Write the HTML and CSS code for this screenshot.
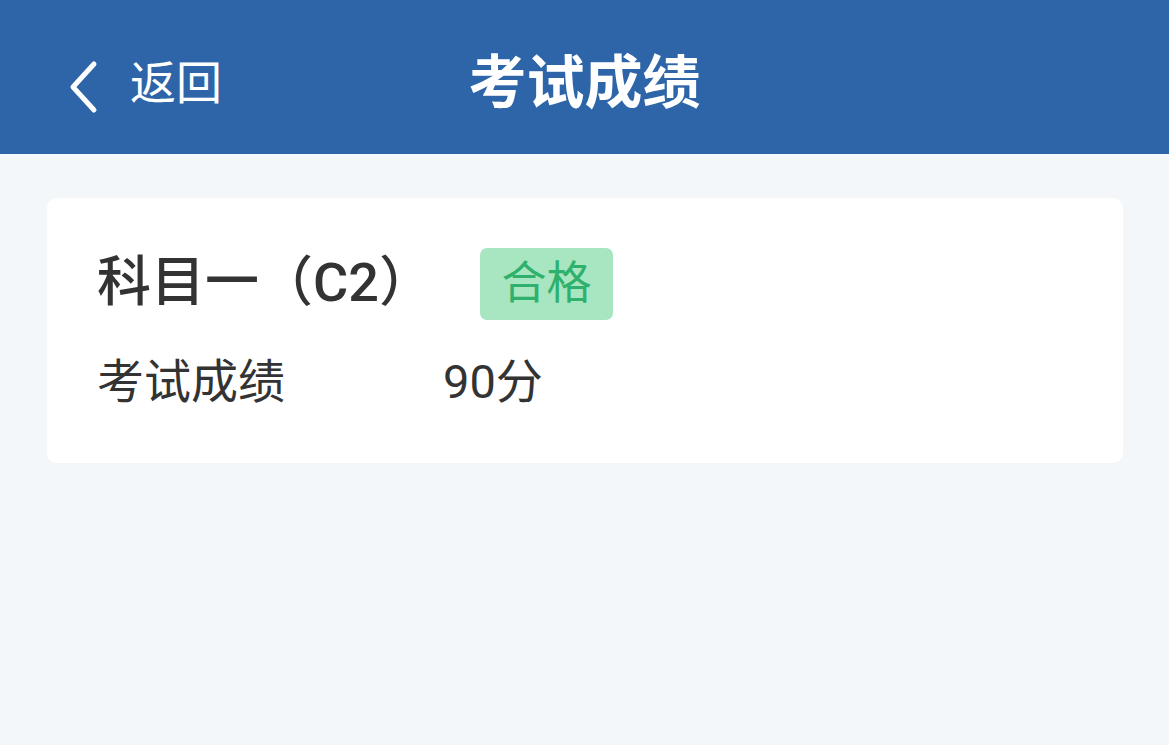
FILE: index.html
```html
<!DOCTYPE html>
<html lang="zh-CN">
<head>
<meta charset="utf-8">
<title>考试成绩</title>
<link rel="stylesheet" href="styles.css">
</head>
<body>
<header class="topbar">
  <a class="back">
    <svg class="back-icon" width="34" height="54" viewBox="0 0 34 54"><path d="M28 4 L7 27 L28 50" fill="none" stroke="#fff" stroke-width="5" stroke-linecap="round" stroke-linejoin="round"/></svg>
    <span class="back-text">返回</span>
  </a>
  <h1 class="title">考试成绩</h1>
</header>
<main class="content">
  <section class="card">
    <div class="card-head">
      <span class="subject">科目一（C2）</span>
      <span class="badge">合格</span>
    </div>
    <div class="row">
      <span class="label">考试成绩</span>
      <span class="value">90分</span>
    </div>
  </section>
</main>
</body>
</html>
```
FILE: styles.css
```css
* { box-sizing: border-box; }
html, body { margin: 0; padding: 0; }
body {
  width: 1169px;
  height: 745px;
  background: #f4f7f9;
  font-family: Roboto, "Noto Sans CJK SC", "Noto Sans", sans-serif;
  color: #333;
  overflow: hidden;
}
.topbar {
  position: relative;
  height: 154px;
  background: #2d65a8;
  display: flex;
  align-items: center;
  justify-content: center;
}
.back {
  position: absolute;
  left: 66px;
  top: 0;
  height: 154px;
  display: flex;
  align-items: center;
  gap: 30px;
  color: #fff;
}
.back-icon { display: block; margin-top: 20px; }
.back-text {
  font-size: 46px;
  line-height: 1;
  margin-top: 11px;
}
.title {
  margin: 11px 0 0;
  font-size: 58px;
  font-weight: 700;
  color: #fff;
  line-height: 1;
}
.content {
  padding: 44px 46px 0 47px;
}
.card {
  background: #fff;
  border-radius: 10px;
  height: 265px;
  padding: 50px 50px 0 50px;
}
.card-head {
  display: flex;
  align-items: center;
  height: 72px;
}
.subject {
  font-size: 54px;
  font-weight: 500;
  line-height: 1;
  color: #333;
  width: 383px;
  margin-top: -2px;
}
.badge {
  width: 133px;
  height: 72px;
  background: #a8e6c1;
  color: #2fb16d;
  border-radius: 7px;
  font-size: 45px;
  line-height: 72px;
  text-align: center;
}
.row {
  display: flex;
  align-items: center;
  margin-top: 25px;
  height: 72px;
}
.label {
  width: 346px;
  font-size: 47px;
  line-height: 1;
}
.value {
  font-size: 47px;
  line-height: 1;
}
```
